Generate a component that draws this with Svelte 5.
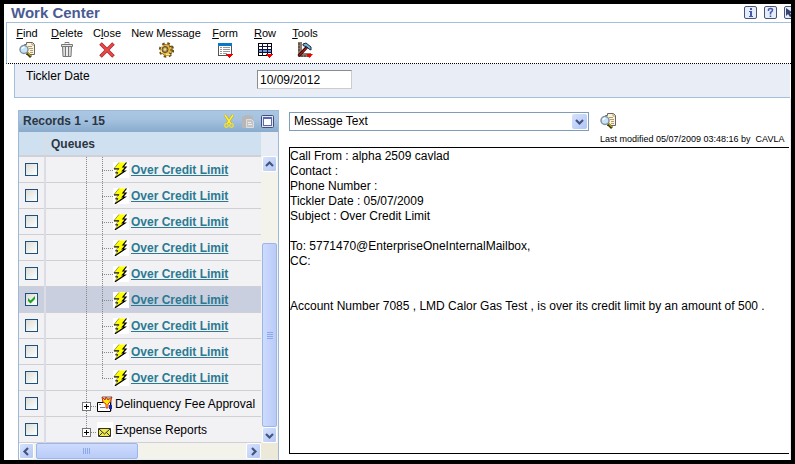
<script>
  const tools = [
    { key: 'F', pre: '', post: 'ind', icon: 'find' },
    { key: 'D', pre: '', post: 'elete', icon: 'trash' },
    { key: 'l', pre: 'C', post: 'ose', icon: 'close' },
    { key: '', pre: 'New Message', post: '', icon: 'gear', wide: true },
    { key: 'F', pre: '', post: 'orm', icon: 'form' },
    { key: 'R', pre: '', post: 'ow', icon: 'row' },
    { key: 'T', pre: '', post: 'ools', icon: 'tools' }
  ];

  let rows = $state([
    ...Array.from({ length: 9 }, (_, i) => ({
      label: 'Over Credit Limit',
      kind: 'message',
      last: i === 8,
      checked: i === 5
    })),
    { label: 'Delinquency Fee Approval', kind: 'fee', last: false, checked: false },
    { label: 'Expense Reports', kind: 'mail', last: true, checked: false }
  ]);

  let date = $state('10/09/2012');

  const message = `Call From : alpha 2509 cavlad
Contact :
Phone Number :
Tickler Date : 05/07/2009
Subject : Over Credit Limit

To: 5771470@EnterpriseOneInternalMailbox,
CC:


Account Number 7085 , LMD Calor Gas Test , is over its credit limit by an amount of 500 .`;
</script>

{#snippet findIcon()}
  <svg width="16" height="16" viewBox="0 0 16 16" aria-hidden="true">
    <path d="M5.5 3.5V2.5H7.5V.5H13.5L15.5 2.5V12.5H7" fill="#fdf3d8" stroke="#666" />
    <path d="M13 1V3H15M9 4.5H13M10 6.5H14M11 8.5H14M11 10.5H14" fill="none" stroke="#b09c78" />
    <circle cx="5" cy="7.5" r="4" fill="#c4e4fa" stroke="#8390a0" stroke-width="1.5" />
    <path d="M3 7Q3.5 5 5.5 5" fill="none" stroke="#fff" stroke-width="1.5" />
    <path d="M8 11L12 15" stroke="#343400" stroke-width="2.6" />
    <path d="M8.5 10.5L12 14" stroke="#b8a520" stroke-width="1.3" />
  </svg>
{/snippet}

{#snippet chevron(dir)}
  <svg width="9" height="9" viewBox="0 0 9 9" aria-hidden="true">
    <path
      d="M1 3L4.5 6.5L8 3"
      fill="none"
      stroke="#435580"
      stroke-width="2.2"
      transform={`rotate(${{ down: 0, left: 90, up: 180, right: 270 }[dir]} 4.5 4.5)`}
    />
  </svg>
{/snippet}

{#snippet toolIcon(name)}
  {#if name === 'find'}
    {@render findIcon()}
  {:else if name === 'trash'}
    <svg width="16" height="16" viewBox="0 0 16 16" aria-hidden="true">
      <path d="M3.5 4.5H12.5L12 14.5H4Z" fill="#ddd" stroke="#777" />
      <path d="M2.5 2.5H13.5V4.5H2.5Z" fill="#e4e4e4" stroke="#777" />
      <path d="M6 1.5V.5H10V1.5M6.5 5V14M9.5 5V14" fill="none" stroke="#777" />
      <path d="M8 5V14" stroke="#fff" />
    </svg>
  {:else if name === 'close'}
    <svg width="16" height="16" viewBox="0 0 16 16" aria-hidden="true">
      <path d="M1.500 1.500L14.500 14.500M14.500 1.500L1.500 14.500" stroke="#a92c2c" stroke-width="3.600" />
      <path d="M2 2L14 14M14 2L2 14" stroke="#e84848" stroke-width="2.200" />
    </svg>
  {:else if name === 'gear'}
    <svg width="16" height="16" viewBox="0 0 16 16" aria-hidden="true">
      <circle cx="8.500" cy="8" r="6.200" fill="none" stroke="#6b511a" stroke-width="3" stroke-dasharray="2.400 2.470" />
      <circle cx="8.500" cy="8" r="5.600" fill="#e2b545" stroke="#a07c28" />
      <path d="M4 11Q2.500 6 6 4M8 12.500H12" fill="none" stroke="#ffe68a" stroke-width="1.500" />
      <circle cx="7" cy="7.500" r="3" fill="#a89058" stroke="#5a4a22" />
      <circle cx="7" cy="7.500" r="1.300" fill="#f4dc88" />
      <path d="M11 5L14 4M12 8H15M11 11L14 12" stroke="#5b4310" />
    </svg>
  {:else if name === 'form'}
    <svg width="16" height="16" viewBox="0 0 16 16" shape-rendering="crispEdges" aria-hidden="true">
      <path d="M1.500 1.500H14.500V13.500H1.500Z" fill="#fff" stroke="#555" />
      <path d="M1 1H15V4H1Z" fill="#0878c8" />
      <path d="M3 5.500H5M6 5.500H13M3 7.500H5M6 7.500H13M3 9.500H5M6 9.500H13M3 11.500H5M6 11.500H10" stroke="#999" />
      <path d="M9 12H16L12.500 16Z" fill="#f00000" />
    </svg>
  {:else if name === 'row'}
    <svg width="16" height="16" viewBox="0 0 16 16" shape-rendering="crispEdges" aria-hidden="true">
      <path d="M1.500 1.500H14.500V13.500H1.500Z" fill="#fff" stroke="#000" />
      <path d="M2 7H14V10H2Z" fill="#6e97dc" />
      <path d="M5.500 1V14M10.500 1V14M1 4.500H15M1 7.500H15M1 10.500H15" stroke="#101030" />
      <path d="M9 12H16L12.500 16Z" fill="#f00000" />
    </svg>
  {:else}
    <svg width="16" height="16" viewBox="0 0 16 16" aria-hidden="true">
      <path d="M1 0H5V11H14V15H1Z" fill="#8d7a6a" />
      <path d="M1 2H3M1 5H3M1 8H3M5 15V13M8 15V13M11 15V13" stroke="#3f332c" />
      <path d="M1.500 14L10 5" stroke="#300" stroke-width="3" />
      <path d="M2 13.500L10 5.500" stroke="#9c2020" stroke-width="1.400" />
      <path d="M6 2L9 1L14 5V8L12 7L10 5L6 3.500Z" fill="#77b5dc" stroke="#122a40" />
      <path d="M9 12H16L12.500 16Z" fill="#f00000" />
    </svg>
  {/if}
{/snippet}

<main class="window">
  <header class="title">
    <h1>Work Center</h1>
    <nav class="help">
      <button aria-label="About">
        <svg width="11" height="11" viewBox="1 1 11 11" shape-rendering="crispEdges" aria-hidden="true">
          <path d="M6 2H8V4H6ZM5 5H8V10H9V11H5V10H6V6H5Z" fill="#4858a8" />
        </svg>
      </button>
      <button aria-label="Help">
        <svg width="11" height="11" viewBox="1 1 11 11" aria-hidden="true">
          <path d="M4.500 5V3.500Q4.500 2.500 6.500 2.500T8.500 4Q8.500 5.500 6.500 6.500V8.500M6.500 9.500V11" fill="none" stroke="#4858a8" stroke-width="1.500" />
        </svg>
      </button>
      <button aria-label="Select">
        <svg width="11" height="11" viewBox="1 1 11 11" aria-hidden="true">
          <path d="M2 2V10L4 8L6 11L8 10L6 7H9Z" fill="#35456f" />
        </svg>
      </button>
    </nav>
  </header>

  <div class="toolbar" role="toolbar" aria-label="Actions">
    {#each tools as t}
      <button class:wide={t.wide}>
        <span>{t.pre}{#if t.key}<u>{t.key}</u>{/if}{t.post}</span>
        {@render toolIcon(t.icon)}
      </button>
    {/each}
  </div>

  <form class="filter">
    <label for="tickler">Tickler Date</label>
    <input id="tickler" type="text" bind:value={date} />
  </form>

  <div class="body">
    <section class="records">
      <header>
        <h2>Records 1 - 15</h2>
        <button aria-label="Cut">
          <svg width="12" height="15" viewBox="0 0 12 15" aria-hidden="true">
            <path d="M2 1L8 10M10 1L4 10" stroke="#b89c28" stroke-width="2.400" />
            <path d="M2 1L8 10M10 1L4 10" stroke="#fff030" stroke-width="1.600" />
            <circle cx="3.500" cy="11.500" r="1.800" fill="none" stroke="#f4e028" stroke-width="1.300" />
            <circle cx="8.500" cy="11.500" r="1.800" fill="none" stroke="#f4e028" stroke-width="1.300" />
          </svg>
        </button>
        <button aria-label="Paste">
          <svg width="12" height="15" viewBox="0 0 12 15" aria-hidden="true">
            <path d="M0 3Q0 2 1 2H3V1H8V2H10Q11 2 11 3V14H0Z" fill="#b7b7b7" />
            <path d="M4.500 5.500H9.500L11.500 7.500V13.500H4.500Z" fill="#c4c4c4" stroke="#ddd" />
            <path d="M6 8.500H9M6 10.500H10" stroke="#eee" />
          </svg>
        </button>
        <button aria-label="Maximize">
          <svg width="13" height="13" viewBox="0 0 13 13" aria-hidden="true">
            <rect x=".5" y=".5" width="12" height="12" rx="1" fill="#dfe6f6" stroke="#444c78" />
            <rect x="2.500" y="2.500" width="8" height="8" fill="#fff" stroke="#5868b4" />
            <path d="M2 3H11" stroke="#5868b4" stroke-width="2" />
          </svg>
        </button>
      </header>

      <div class="grid">
        <table>
          <thead>
            <tr>
              <th class="pick" aria-label="Select"></th>
              <th>Queues</th>
            </tr>
          </thead>
          <tbody>
            {#each rows as row}
              <tr class:selected={row.checked}>
                <td class="pick">
                  <label class="check">
                    <input type="checkbox" bind:checked={row.checked} aria-label={row.label} />
                    {#if row.checked}
                      <svg width="13" height="13" viewBox="0 0 13 13" aria-hidden="true">
                        <path d="M3 5L5.500 7.500L10 3V6L5.500 10.500L3 8Z" fill="#21a121" />
                      </svg>
                    {/if}
                  </label>
                </td>
                <td>
                  {#if row.kind === 'message'}
                    <div class="node">
                      <svg width="67" height="25" viewBox="0 0 67 25" shape-rendering="crispEdges" aria-hidden="true">
                        <path d="M40.500 0V25M56.500 0V{row.last ? 14 : 25}M56 13.500H67" fill="none" stroke="#888" stroke-dasharray="1 1" />
                      </svg>
                      <svg class="bolt" width="16" height="16" viewBox="0 0 16 16" aria-hidden="true">
                        <path d="M6 .5H13.500L10 5H13L9.500 9H12L2 15.500L5 11H2.500L6 7H1Z" fill="#ff0" />
                        <path d="M6 .5L1 6.500H6L2.500 10.500H5L2 15.500" fill="none" stroke="#555500" stroke-width=".6" />
                        <path d="M13.500 .5L10 5H13L9.500 9H12L2 15.800" fill="none" stroke="#000" stroke-width="1.200" />
                        <path d="M1 7H6M2.500 11H5" stroke="#000" />
                      </svg>
                      <a href="#message">{row.label}</a>
                    </div>
                  {:else}
                    <div class="node group">
                      <svg width="51" height="25" viewBox="0 0 51 25" shape-rendering="crispEdges" aria-hidden="true">
                        <path d="M40.500 0V{row.last ? 12 : 25}M45 15.500H51" fill="none" stroke="#888" stroke-dasharray="1 1" />
                        <path d="M36.500 11.500H44.500V19.500H36.500Z" fill="#fff" stroke="#777" />
                        <path d="M38 15.500H43M40.500 13V18" stroke="#000" />
                      </svg>
                      {#if row.kind === 'fee'}
                        <svg width="16" height="16" viewBox="0 0 16 16" aria-hidden="true">
                          <path d="M5 0H15V15H5Z" fill="#aaa" />
                          <path d="M.5 6.500H13.500V15.500H.5Z" fill="#fff" stroke="#000" />
                          <path d="M5 1L8 4L9 1L11 4L15 1L13 6L11 8V12H9V8L6 6Z" fill="#ffe600" stroke="#d52b1e" />
                          <path d="M12 9H15V13H12Z" fill="#1822b8" />
                          <path d="M2 8.500H4M3 11.500H8" stroke="#777" />
                        </svg>
                      {:else}
                        <svg class="mail" width="16" height="16" viewBox="0 0 16 16" aria-hidden="true">
                          <path d="M1.500 6.500H13.500V14.500H1.500Z" fill="#efe84a" stroke="#333" />
                          <path d="M2 7L7.500 12L13 7M2 14L5.500 10.500M13 14L9.500 10.500" fill="none" stroke="#333" />
                        </svg>
                      {/if}
                      <span>{row.label}</span>
                    </div>
                  {/if}
                </td>
              </tr>
            {/each}
          </tbody>
        </table>

        <div class="vbar">
          <button aria-label="Scroll up">{@render chevron('up')}</button>
          <div class="track">
            <div class="thumb"><i></i><i></i><i></i><i></i></div>
          </div>
          <button aria-label="Scroll down">{@render chevron('down')}</button>
        </div>

        <div class="hbar">
          <button aria-label="Scroll left">{@render chevron('left')}</button>
          <div class="track">
            <div class="thumb"><i></i><i></i><i></i><i></i></div>
          </div>
          <button aria-label="Scroll right">{@render chevron('right')}</button>
        </div>
        <div class="corner"></div>
      </div>
    </section>

    <section class="viewer">
      <div class="bar">
        <div class="picker">
          <select aria-label="Attachment">
            <option>Message Text</option>
          </select>
          <span class="drop">{@render chevron('down')}</span>
        </div>
        <div class="info">
          <button aria-label="Find">{@render findIcon()}</button>
          <p>Last modified 05/07/2009 03:48:16 by&nbsp; CAVLA</p>
        </div>
      </div>
      <textarea readonly aria-label="Message" value={message}></textarea>
    </section>
  </div>
</main>

<style>
  :global(body) {
    background: #000;
  }

  .window {
    box-sizing: border-box;
    min-height: 100vh;
    display: flex;
    flex-direction: column;
    border: 4px solid #000;
    background: #fff;
    color: #000;
    font: 12px/15px 'Liberation Sans', Arial, sans-serif;
    overflow: hidden;
  }

  button {
    padding: 0;
    border: 0;
    background: none;
    font: inherit;
    color: inherit;
  }

  svg {
    display: block;
    flex: none;
  }

  h1,
  h2,
  p {
    margin: 0;
  }

  .title {
    display: flex;
    justify-content: space-between;
    height: 18px;
    padding-left: 7px;
    overflow: hidden;
  }

  h1 {
    font-size: 15px;
    line-height: 17px;
    color: #4a5b93;
  }

  .help {
    display: flex;
    gap: 7px;
    padding-top: 2px;
    margin-right: -6px;
  }

  .help button {
    box-sizing: border-box;
    display: grid;
    place-items: center;
    width: 13px;
    height: 13px;
    border: 1px solid #4b5273;
    border-radius: 2px;
    background: #e3edfb;
  }

  .toolbar {
    display: flex;
    height: 40px;
    margin-left: 2px;
    border: 1px solid #a2bfdb;
    border-width: 1px 0 0 1px;
    border-bottom: 1px dotted #000;
    font-size: 11px;
  }

  .toolbar button {
    display: flex;
    flex-direction: column;
    align-items: center;
    width: 40px;
    padding-top: 3px;
    gap: 1px;
    white-space: nowrap;
  }

  .toolbar button.wide {
    width: 78px;
  }

  .filter {
    display: flex;
    align-items: flex-start;
    height: 33px;
    margin: 0 1px 0 10px;
    border: 1px solid #a2bfdb;
    border-width: 0 0 1px 1px;
    background: #e9edf6;
  }

  .filter label {
    width: 231px;
    margin-top: 5px;
    padding-left: 11px;
  }

  .filter input {
    box-sizing: border-box;
    width: 95px;
    height: 19px;
    margin-top: 6px;
    padding: 0 2px;
    border: 1px solid #ccc;
    border-top-color: #8c8c8c;
    border-left-color: #8c8c8c;
    background: #fff;
    font: inherit;
  }

  .body {
    display: flex;
    flex: 1;
    gap: 10px;
    padding: 12px 1px 0 14px;
    border-right: 1px solid #ebebeb;
  }

  .records {
    flex: none;
    width: 259px;
    border: 1px solid #9db9d6;
    border-bottom: 0;
    background: #e8ecf5;
  }

  .records > header {
    display: flex;
    align-items: center;
    gap: 7px;
    height: 21px;
    padding: 0 4px;
    background: linear-gradient(#a9c6e2, #a5c2e0 40%, #89abcc);
  }

  h2 {
    flex: 1;
    font-size: 12px;
    color: #2c3540;
  }

  .grid {
    display: grid;
    grid-template: auto 16px / 1fr 17px;
  }

  table {
    width: 100%;
    border-collapse: collapse;
    table-layout: fixed;
    background: #f2f2f5;
  }

  th {
    height: 21px;
    padding: 2px 0 0 5px;
    border-bottom: 2px solid #d0d0d6;
    background: #cfe0f0;
    color: #2c3540;
    text-align: left;
  }

  td {
    height: 25px;
    padding: 0;
    border-bottom: 1px solid #cfcfd6;
  }

  .pick {
    width: 25px;
    padding-left: 0;
    border-right: 2px solid #dcdce4;
  }

  .selected {
    background: #c9cfde;
  }

  .check {
    position: relative;
    display: block;
    width: 13px;
    height: 13px;
    margin: 0 auto;
  }

  .check input {
    appearance: none;
    display: block;
    box-sizing: border-box;
    width: 13px;
    height: 13px;
    margin: 0;
    border: 1px solid #1c5180;
    background: linear-gradient(135deg, #dcdcd7, #fff);
  }

  .check svg {
    position: absolute;
    inset: 0;
    pointer-events: none;
  }

  .node {
    display: flex;
    align-items: center;
    height: 25px;
    white-space: nowrap;
  }

  .node a,
  .node span {
    margin-left: 2px;
    padding-top: 2px;
  }

  .node a {
    font-weight: bold;
    color: #2b7a92;
  }

  .bolt,
  .mail {
    background: #fff;
  }

  .vbar,
  .hbar {
    display: flex;
    background: #f3f3ec;
  }

  .vbar {
    flex-direction: column;
    margin-top: 24px;
    padding: 0 1px;
  }

  .corner {
    background: #ece9d8;
  }

  .hbar button,
  .vbar button {
    box-sizing: border-box;
    display: grid;
    place-items: center;
    flex: none;
    width: 15px;
    height: 16px;
    border: 1px solid #fff;
    border-radius: 2px;
    background: linear-gradient(135deg, #d6e2fd, #b5c8f4);
  }

  .track {
    flex: 1;
    display: flex;
  }

  .vbar .track {
    align-items: flex-end;
  }

  .thumb {
    box-sizing: border-box;
    display: flex;
    align-items: center;
    justify-content: center;
    gap: 1px;
    border: 1px solid #9cb5ea;
    border-radius: 2px;
    background: #c5d5fc;
  }

  .vbar .thumb {
    flex-direction: column;
    width: 15px;
    height: 72%;
    background: linear-gradient(90deg, #cddbfd, #b9cbf8);
  }

  .hbar .thumb {
    width: 48%;
    margin-left: 2px;
    background: linear-gradient(#cddbfd, #b9cbf8);
  }

  .thumb i {
    width: 6px;
    height: 1px;
    background: #8ea9e8;
  }

  .hbar .thumb i {
    width: 1px;
    height: 6px;
  }

  .viewer {
    flex: 1;
    min-width: 0;
    display: flex;
    flex-direction: column;
    margin-bottom: 6px;
  }

  .bar {
    display: flex;
    gap: 11px;
    height: 37px;
    overflow: hidden;
  }

  .picker {
    position: relative;
    flex: none;
    width: 60%;
    height: 19px;
    margin-top: 2px;
  }

  select {
    appearance: none;
    box-sizing: border-box;
    width: 100%;
    height: 19px;
    padding: 0 4px;
    border: 1px solid #7f9db9;
    border-radius: 0;
    background: #fff;
    color: #000;
    font: inherit;
  }

  .drop {
    position: absolute;
    top: 2px;
    right: 2px;
    display: grid;
    place-items: center;
    width: 15px;
    height: 15px;
    border-radius: 2px;
    background: linear-gradient(135deg, #d6e2fd, #b0c5f5);
    pointer-events: none;
  }

  .info {
    flex: 1;
    min-width: 0;
    display: flex;
    flex-direction: column;
    align-items: flex-start;
    gap: 4px;
    padding-top: 3px;
    overflow: hidden;
  }

  .info p {
    font-size: 9px;
    line-height: 12px;
    white-space: nowrap;
  }

  textarea {
    flex: 1;
    box-sizing: border-box;
    display: block;
    width: 100%;
    padding: 1px 0;
    border: 1px solid #000;
    border-right: 0;
    border-radius: 0;
    background: #fff;
    color: #000;
    font: inherit;
    resize: none;
    white-space: pre;
    overflow: hidden;
  }
</style>
